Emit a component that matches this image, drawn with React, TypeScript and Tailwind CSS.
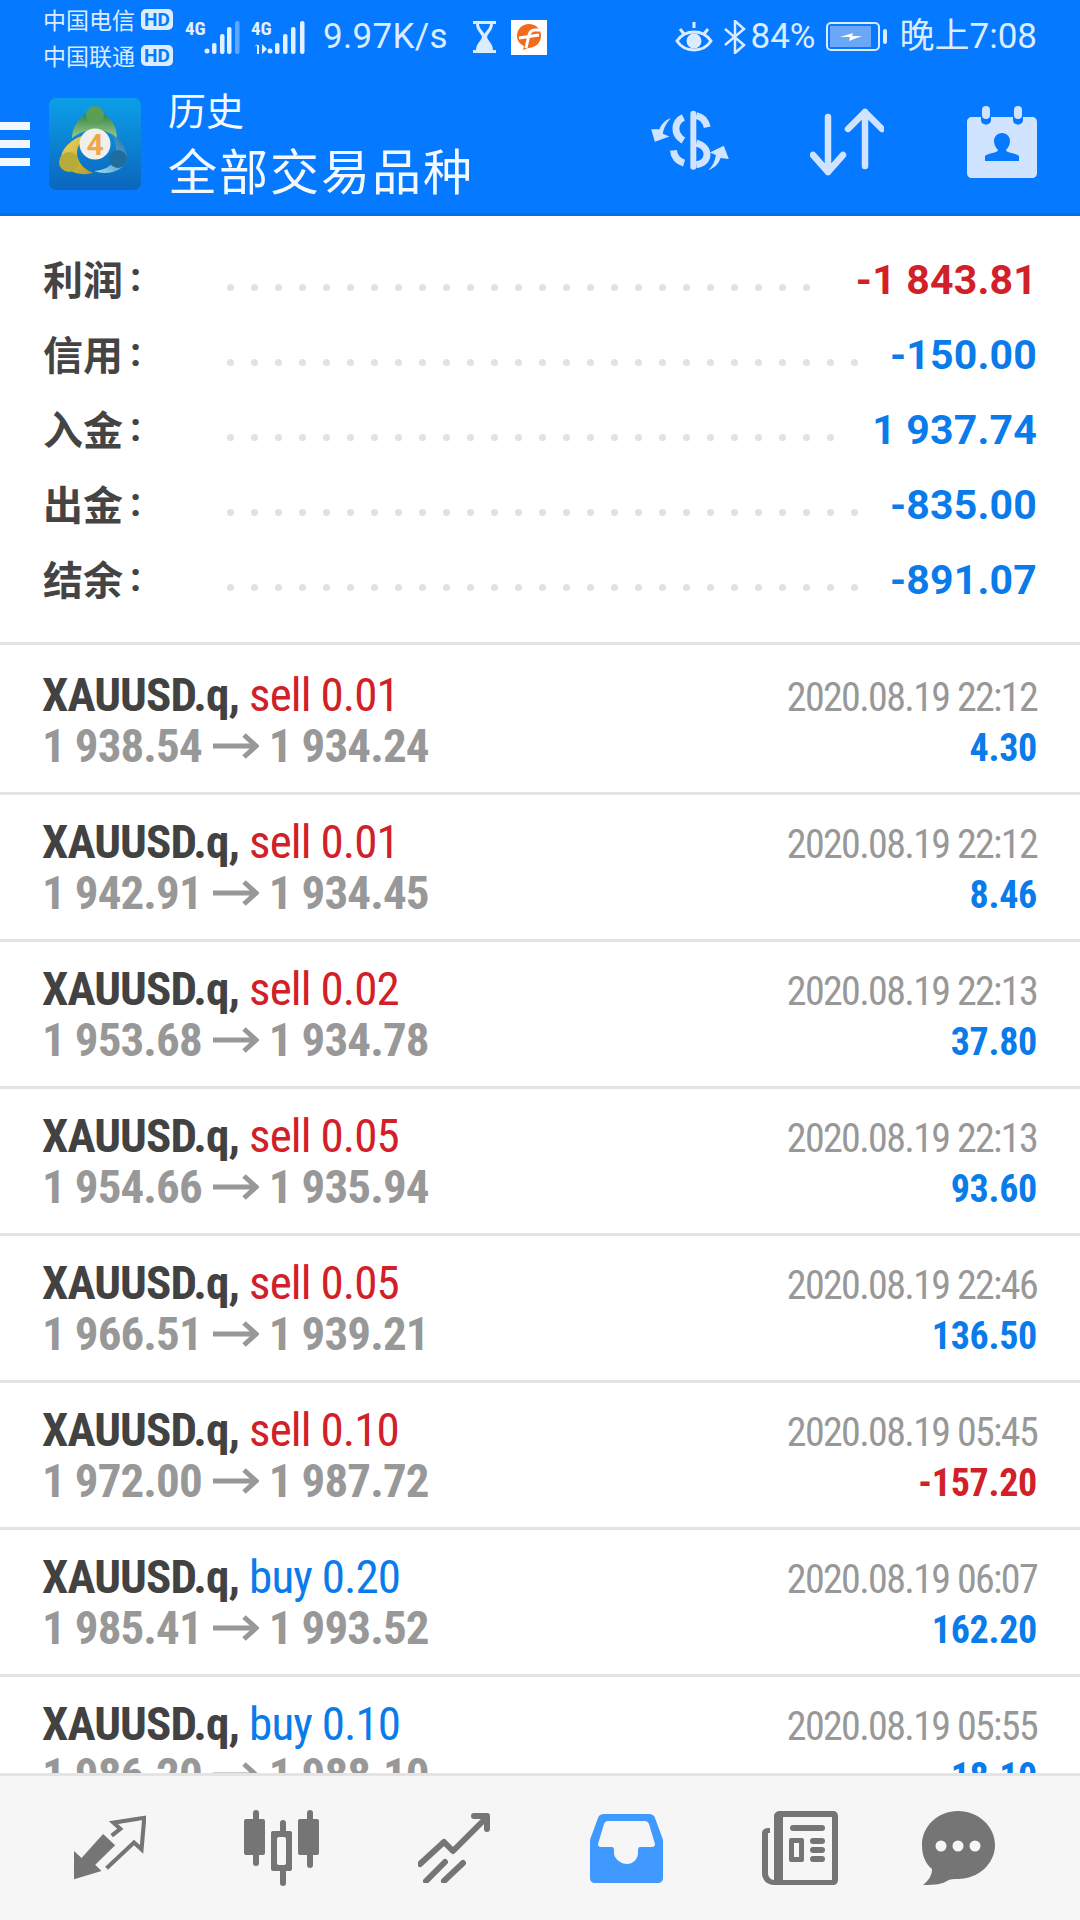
import React from 'react';

const rows = [
  { side: 'sell 0.01', from: '1 938.54', to: '1 934.24', time: '2020.08.19 22:12', pnl: '4.30' },
  { side: 'sell 0.01', from: '1 942.91', to: '1 934.45', time: '2020.08.19 22:12', pnl: '8.46' },
  { side: 'sell 0.02', from: '1 953.68', to: '1 934.78', time: '2020.08.19 22:13', pnl: '37.80' },
  { side: 'sell 0.05', from: '1 954.66', to: '1 935.94', time: '2020.08.19 22:13', pnl: '93.60' },
  { side: 'sell 0.05', from: '1 966.51', to: '1 939.21', time: '2020.08.19 22:46', pnl: '136.50' },
  { side: 'sell 0.10', from: '1 972.00', to: '1 987.72', time: '2020.08.19 05:45', pnl: '-157.20' },
  { side: 'buy 0.20', from: '1 985.41', to: '1 993.52', time: '2020.08.19 06:07', pnl: '162.20' },
  { side: 'buy 0.10', from: '1 986.20', to: '1 988.10', time: '2020.08.19 05:55', pnl: '18.10' },
];

const summary = [
  { label: '利润', value: '-1 843.81', dots: 25, red: true },
  { label: '信用', value: '-150.00', dots: 27, red: false },
  { label: '入金', value: '1 937.74', dots: 26, red: false },
  { label: '出金', value: '-835.00', dots: 27, red: false },
  { label: '结余', value: '-891.07', dots: 27, red: false },
];

const Signal: React.FC<{ second?: boolean }> = ({ second }) => (
  <svg width="56" height="40" viewBox="0 0 56 40" fill="#e3f0ff">
    <text x="0" y="18" fontSize="19" fontWeight="700" fontFamily="Roboto, sans-serif" style={{ fontStretch: '75%' }}>4G</text>
    {second ? (
      <>
        <path d="M3 30l3-3v10h2V28h-2zM11 27v10l5-5z" />
        <circle cx="19" cy="34" r="2.500" />
        <rect x="24" y="26" width="4.500" height="11" rx="2" />
        <rect x="32" y="17" width="4.500" height="20" rx="2" />
        <rect x="40" y="10" width="4.500" height="27" rx="2" />
        <rect x="49" y="4" width="4.500" height="33" rx="2" />
      </>
    ) : (
      <>
        <circle cx="22" cy="34" r="2.500" />
        <rect x="27" y="26" width="4.500" height="11" rx="2" />
        <rect x="35" y="17" width="4.500" height="20" rx="2" />
        <rect x="42" y="10" width="4.500" height="27" rx="2" />
        <rect x="50" y="4" width="4.500" height="33" rx="2" opacity={0.4} />
      </>
    )}
  </svg>
);

const Logo = () => (
  <svg width="92" height="92" viewBox="0 0 92 92">
    <defs>
      <linearGradient id="logoBg" x1="0" y1="0" x2="0" y2="1">
        <stop offset="0" stopColor="#0c9fe8" />
        <stop offset="1" stopColor="#0b66bd" />
      </linearGradient>
      <linearGradient id="logoGreen" x1="0" y1="0" x2="0" y2="1">
        <stop offset="0" stopColor="#2f7f42" />
        <stop offset="1" stopColor="#9cc98d" />
      </linearGradient>
      <linearGradient id="logoGold" x1="0" y1="0" x2="1" y2="1">
        <stop offset="0" stopColor="#f0d964" />
        <stop offset="1" stopColor="#b89a22" />
      </linearGradient>
      <linearGradient id="logoBlue" x1="1" y1="0" x2="0" y2="1">
        <stop offset="0" stopColor="#1a6fa6" />
        <stop offset="1" stopColor="#a4dcf3" />
      </linearGradient>
    </defs>
    <rect width="92" height="92" rx="7" fill="url(#logoBg)" />
    <path d="M23 40C24 24 35 14 46 14s22 10 22 26c-6-5-12-8-22-8s-16 3-23 8z" fill="url(#logoGreen)" />
    <circle cx="46" cy="17" r="9" fill="#5b9e55" />
    <path d="M40 36C27 38 13 48 12 60c0 12 18 19 32 15-10-4-16-12-16-20 0-7 5-14 12-19z" fill="url(#logoGold)" />
    <circle cx="20" cy="64" r="10" fill="#b7ab3a" />
    <path d="M63 36c8 6 15 14 15 24-1 13-20 18-33 13 12-1 20-6 22-15 1-8-1-15-4-22z" fill="url(#logoBlue)" />
    <circle cx="69" cy="61" r="9" fill="#1f6d9e" />
    <circle cx="46" cy="46" r="15.500" fill="#f1efea" />
    <text x="46" y="57" textAnchor="middle" fontSize="30" fontWeight="700" fontFamily="Roboto, sans-serif" fill="#eea84b">4</text>
  </svg>
);

const Row: React.FC<(typeof rows)[number]> = ({ side, from, to, time, pnl }) => (
  <div className="h-[147px] shrink-0 border-b-[3px] border-[#e4e4e4] flex justify-between pl-[42px] pr-[43px] pt-[21px] [font-family:Roboto,sans-serif] [font-stretch:75%]">
    <div className="text-[47px] leading-[51px] tracking-[-0.9px] whitespace-nowrap">
      <div className="h-[51px]">
        <span className="font-bold text-[#424242]">XAUUSD.q, </span>
        <span className={side.startsWith('sell') ? 'text-[#d12027]' : 'text-[#0a7bea]'}>{side}</span>
      </div>
      <div className="h-[51px] flex items-center font-bold text-[#989898]">
        <span>{from}</span>
        <svg className="ml-[11px] mr-[10px]" width="46" height="26" viewBox="0 0 46 26" fill="none" stroke="#989898" strokeWidth="5">
          <path d="M0 13h43M31 2l12 11-12 11" />
        </svg>
        <span>{to}</span>
      </div>
    </div>
    <div className="flex flex-col items-end pt-[4px]">
      <div className="h-[50px] text-[40px] leading-[50px] tracking-[-1.65px] text-[#989898] whitespace-nowrap">{time}</div>
      <div className={`h-[50px] text-[38px] leading-[50px] tracking-[-0.3px] font-bold ${pnl.startsWith('-') ? 'text-[#d12027]' : 'text-[#0a7bea]'}`}>{pnl}</div>
    </div>
  </div>
);

export default function App() {
  return (
    <div className="w-[1080px] h-[1920px] flex flex-col bg-white overflow-hidden [font-family:Roboto,'Noto_Sans_CJK_SC',sans-serif]">
      <div className="h-[216px] shrink-0 bg-[#0579ff] border-b-[3px] border-[#056ee6] flex flex-col">
        <div className="h-[74px] flex items-center pl-[43px] text-[#dcecff]">
          <div className="w-[134px] text-[23px] leading-[36px] [font-family:'Noto_Sans_CJK_SC',sans-serif]">
            <div className="flex items-center gap-[6px]">中国电信<span className="h-[21px] w-[32px] rounded-[5px] bg-[#dcecff] text-[#0579ff] text-[19px] leading-[21px] font-bold text-center [font-family:Roboto,sans-serif]">HD</span></div>
            <div className="flex items-center gap-[6px]">中国联通<span className="h-[21px] w-[32px] rounded-[5px] bg-[#dcecff] text-[#0579ff] text-[19px] leading-[21px] font-bold text-center [font-family:Roboto,sans-serif]">HD</span></div>
          </div>
          <div className="ml-[8px] flex gap-[10px]">
            <Signal />
            <Signal second />
          </div>
          <span className="ml-[16px] text-[35px] tracking-[0.3px]">9.97K/s</span>
          <svg className="ml-[24px]" width="25" height="34" viewBox="0 0 25 34" fill="#dcecff">
            <path d="M1 1h23v3h-3c0 6-5 9-6 13 1 4 6 7 6 13h3v3H1v-3h3c0-6 5-9 6-13-1-4-6-7-6-13H1z" />
            <path d="M7 4h11c0 4-4 7-5.500 10C11 11 7 8 7 4z" fill="#0579ff" />
          </svg>
          <div className="ml-[14px] w-[36px] h-[35px] bg-white flex items-center justify-center">
            <svg width="26" height="28" viewBox="0 0 26 28">
              <path d="M13 1c7 0 12 5 12 12 0 7-6 12-13 12l-5 2 1-4C4 21 1 18 1 13 1 6 6 1 13 1z" fill="#f26a1b" />
              <path d="M10 25l3-13c1-4 3-5 6-5h5M3 15l20-3" fill="none" stroke="#fff" strokeWidth="3" />
            </svg>
          </div>
          <div className="ml-auto pr-[43px] flex items-center text-[35px]">
            <svg width="38" height="34" viewBox="0 0 38 34" fill="none" stroke="#dcecff" strokeWidth="3">
              <path d="M2 21c4-6 10-9 17-9s13 3 17 9c-4 6-10 9-17 9S6 27 2 21z" />
              <circle cx="19" cy="21" r="6" fill="#dcecff" />
              <path d="M5 9l4 5M19 2v6M33 9l-4 5" />
            </svg>
            <svg className="ml-[11px]" width="22" height="34" viewBox="0 0 22 34" fill="none" stroke="#dcecff" strokeWidth="2.500">
              <path d="M1 9l19 16-9 8V1l9 8L1 25" />
            </svg>
            <span className="ml-[5px]">84%</span>
            <svg className="ml-[10px]" width="62" height="30" viewBox="0 0 62 30" fill="none">
              <rect x="1" y="1" width="52" height="27" rx="4" stroke="#dcecff" strokeWidth="2" />
              <rect x="4" y="4" width="41" height="21" fill="#6aa8f7" />
              <rect x="57" y="7" width="4" height="15" rx="2" fill="#dcecff" />
              <path d="M14 15l13-4-1 3 10 0-13 5 1-4z" fill="#fff" />
            </svg>
            <span className="ml-[12px]">晚上7:08</span>
          </div>
        </div>
        <div className="flex-1 flex items-center text-white">
          <div className="w-[30px] flex flex-col gap-[10px]">
            <div className="h-[8px] bg-[#f2f7ff]" />
            <div className="h-[8px] bg-[#f2f7ff]" />
            <div className="h-[8px] bg-[#f2f7ff]" />
          </div>
          <div className="ml-[19px]"><Logo /></div>
          <div className="ml-[27px] mb-[2px] [font-family:'Noto_Sans_CJK_SC',sans-serif] text-[#f4f8ff]">
            <div className="text-[38px] leading-[46px]">历史</div>
            <div className="mt-[6px] text-[49px] leading-[62px] tracking-[2px]">全部交易品种</div>
          </div>
          <div className="ml-auto pr-[43px] mb-[4px] flex items-center">
            <svg width="80" height="63" viewBox="0 0 240 190" fill="none" stroke="#d1e4ff" strokeWidth="21" strokeLinecap="butt">
              <rect x="121" y="2" width="18" height="178" rx="9" fill="#d1e4ff" stroke="none" />
              <path d="M100 22C72 36 68 72 100 92" />
              <path d="M139 17C155 20 167 32 172 52" />
              <path d="M139 100C182 110 182 160 139 165" />
              <path d="M70 122C72 142 85 155 102 160" />
              <path d="M62 25C45 30 32 45 28 58L3 58L14 96L58 80L38 72C40 55 50 38 62 25Z" fill="#d1e4ff" stroke="none" />
              <path d="M175 182C195 175 208 160 212 145L237 148L222 108L180 128L198 136C196 155 188 170 175 182Z" fill="#d1e4ff" stroke="none" />
            </svg>
            <svg className="ml-[80px]" width="74" height="68" viewBox="0 0 74 68" fill="none" stroke="#d1e4ff" strokeWidth="6.500" strokeLinecap="round" strokeLinejoin="round">
              <path d="M18 9v55M3 47l15 17 15-17M55 4v54M38 21L55 4l17 17" />
            </svg>
            <svg className="ml-[83px]" width="70" height="72" viewBox="0 0 70 72" fill="#d1e4ff">
              <path d="M5 11h9v3c0 6 10 6 10 0v-3h22v3c0 6 10 6 10 0v-3h9c3 0 5 2 5 5v51c0 3-2 5-5 5H5c-3 0-5-2-5-5V16c0-3 2-5 5-5z" />
              <rect x="15" y="0" width="8" height="13" rx="4" />
              <rect x="47" y="0" width="8" height="13" rx="4" />
              <path d="M35 27c5 0 8 4 8 8 0 4-2 7-4 9 0 3 10 3 13 6v5H18v-5c3-3 13-3 13-6-2-2-4-5-4-9 0-4 3-8 8-8z" fill="#0579ff" />
            </svg>
          </div>
        </div>
      </div>

      <div className="flex-1 min-h-0 overflow-hidden">
        <div className="h-[429px] border-b-[3px] border-[#e4e4e4] pt-[27px] pl-[43px] pr-[43px]">
          {summary.map((s) => (
            <div key={s.label} className="h-[75px] flex items-center">
              <span className="w-[184px] -mt-[6px] flex items-center text-[40px] font-bold text-[#444] [font-family:'Noto_Sans_CJK_SC',sans-serif]">
                {s.label}<span className="ml-[7px] [font-family:Roboto,sans-serif]">:</span>
              </span>
              <div className="flex gap-[17px] mt-[13px]">
                {Array.from({ length: s.dots }).map((_, i) => (
                  <span key={i} className="h-[7px] w-[7px] rounded-full bg-[#e2e2e2]" />
                ))}
              </div>
              <span className={`ml-auto text-[41px] font-bold tracking-[0.2px] ${s.red ? 'text-[#d12027]' : 'text-[#0a7bea]'}`}>{s.value}</span>
            </div>
          ))}
        </div>
        <div className="pt-[3px]">
          {rows.map((r) => (
            <Row key={r.time + r.from} {...r} />
          ))}
        </div>
      </div>

      <div className="h-[147px] shrink-0 bg-[#f6f6f6] border-t-[3px] border-[#e4e4e4] flex items-center pl-[74px]">
        <svg width="72" height="66" viewBox="0 0 210 192">
          <path d="M85 55L120 88L62 145L80 163L0 187L0 105L22 125Z" fill="#757575" />
          <path d="M110 60L135 40L115 22L205 8L197 100L175 80L95 155" fill="none" stroke="#757575" strokeWidth="12" />
        </svg>
        <svg className="ml-[98px]" width="76" height="76" viewBox="0 0 76 76" fill="#757575">
          <rect x="9" y="0" width="6" height="56" rx="3" />
          <rect x="0" y="9" width="21" height="36" rx="2" />
          <rect x="63" y="0" width="6" height="58" rx="3" />
          <rect x="54" y="9" width="21" height="36" rx="2" />
          <rect x="36" y="10" width="6" height="66" rx="3" />
          <rect x="27" y="21" width="21" height="40" rx="2" />
          <rect x="33" y="27" width="9" height="28" rx="2" fill="#f6f6f6" />
        </svg>
        <svg className="ml-[98px]" width="72" height="70" viewBox="0 0 72 70" fill="none" stroke="#757575" strokeWidth="6" strokeLinecap="round" strokeLinejoin="round">
          <path d="M2 51l24-22 9 9 34-34M56 3h13v13" />
          <path d="M8 68l19-19M26 68l19-18" />
        </svg>
        <svg className="ml-[100px]" width="73" height="69" viewBox="0 0 73 69" fill="#4099ff">
          <path d="M14 0h45c3 0 5 1 6 4l7 19c1 2 1 3 1 6v35c0 3-2 5-5 5H5c-3 0-5-2-5-5V29c0-3 0-4 1-6L8 4c1-3 3-4 6-4z" />
          <path d="M18 7h37c2 0 3 1 4 3l6 20c0 2-1 3-3 3H50c-1 0-2 1-2 3v3c0 6-5 11-11 11s-13-5-13-11v-3c0-2-1-3-2-3H11c-2 0-3-1-3-3l6-20c1-2 2-3 4-3z" fill="#f6f6f6" />
        </svg>
        <svg className="ml-[99px]" width="76" height="74" viewBox="0 0 76 74" fill="#757575">
          <path d="M18 0h53c3 0 5 2 5 5v64c0 3-2 5-5 5H12C5 74 0 69 0 62V22c0-2 2-5 6-5h2v5H6v40c0 4 3 7 6 7V5c0-3 3-5 6-5zm3 6v63h49V6z" fillRule="evenodd" />
          <rect x="28" y="14" width="35" height="6" rx="3" />
          <rect x="27" y="27" width="15" height="24" rx="2" />
          <rect x="32" y="32" width="5" height="14" fill="#f6f6f6" />
          <rect x="48" y="27" width="15" height="6" rx="3" />
          <rect x="48" y="36" width="15" height="6" rx="3" />
          <rect x="48" y="45" width="15" height="6" rx="3" />
        </svg>
        <svg className="ml-[84px]" width="73" height="74" viewBox="0 0 73 74" fill="#757575">
          <path d="M36 0c20 0 37 15 37 34S56 68 36 68c-4 0-8 0-11 2-5 3-11 4-24 4 5-4 9-9 9-16C3 52 0 44 0 34 0 15 16 0 36 0z" />
          <circle cx="19" cy="35" r="5.500" fill="#f6f6f6" />
          <circle cx="36" cy="35" r="5.500" fill="#f6f6f6" />
          <circle cx="53" cy="35" r="5.500" fill="#f6f6f6" />
        </svg>
      </div>
    </div>
  );
}
